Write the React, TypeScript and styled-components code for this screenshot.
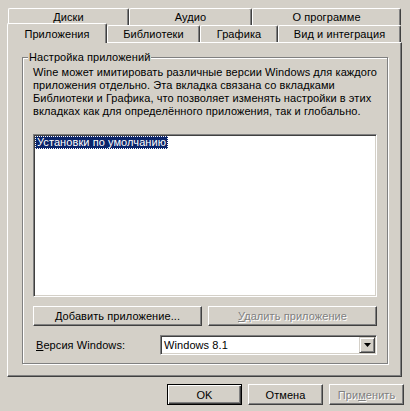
import React from "react";
import styled, { createGlobalStyle } from "styled-components";

const GlobalStyle = createGlobalStyle`
  html, body {
    margin: 0;
    background: #d4d0c8;
  }
  body {
    font-family: "Liberation Sans", Arial, sans-serif;
    font-size: 11px;
    letter-spacing: 0.08px;
    color: #000;
  }
`;

const Window = styled.div`
  box-sizing: border-box;
  width: 410px;
  height: 411px;
  padding: 8px 6px 0 7px;
  display: flex;
  flex-direction: column;
`;

const TabStrip = styled.div`
  width: 395px;
  display: flex;
  flex-direction: column;
  position: relative;
  z-index: 1;
`;

const TabRow = styled.div<{ $indent: number }>`
  display: flex;
  align-items: flex-end;
  height: 17px;
  padding-left: ${(p) => p.$indent}px;
`;

const Tab = styled.div<{ $width: number; $active?: boolean }>`
  box-sizing: border-box;
  width: ${(p) => p.$width}px;
  height: ${(p) => (p.$active ? 20 : 17)}px;
  margin-bottom: ${(p) => (p.$active ? -1 : 0)}px;
  border-top: 1px solid #fff;
  border-left: 1px solid #fff;
  border-right: 1px solid #404040;
  border-radius: 2px 2px 0 0;
  box-shadow: inset -1px 0 #808080;
  background: #d4d0c8;
  display: flex;
  align-items: center;
  justify-content: center;
  white-space: nowrap;
  position: relative;
  z-index: ${(p) => (p.$active ? 2 : 1)};
`;

const Panel = styled.div`
  box-sizing: border-box;
  width: 395px;
  height: 335px;
  border: 1px solid;
  border-color: #fff #404040 #404040 #fff;
  box-shadow: inset -1px -1px #808080;
  padding: 8px 0 0 14px;
`;

const Group = styled.fieldset`
  box-sizing: border-box;
  width: 366px;
  min-inline-size: 0;
  margin: 0;
  padding: 2px 10px 8px 10px;
  border: 1px solid #808080;
  box-shadow: 1px 1px 0 #fff, inset 1px 1px 0 #fff;
  display: flex;
  flex-direction: column;
`;

const GroupTitle = styled.legend`
  margin-left: -5px;
  padding: 0 1px;
  line-height: 13px;
  background: #d4d0c8;
`;

const Description = styled.p`
  margin: 0;
  line-height: 13px;
  white-space: nowrap;
`;

const ListBox = styled.div`
  box-sizing: border-box;
  height: 163px;
  margin-top: 16px;
  padding: 1px;
  background: #fff;
  border: 1px solid;
  border-color: #808080 #fff #fff #808080;
  box-shadow: inset 1px 1px #404040, inset -1px -1px #d4d0c8;
`;

const ListItem = styled.div<{ $selected?: boolean }>`
  width: fit-content;
  padding: 0 2px;
  line-height: 13px;
  color: ${(p) => (p.$selected ? "#fff" : "#000")};
  background: ${(p) => (p.$selected ? "#0a246a" : "transparent")};
  outline: ${(p) => (p.$selected ? "1px dotted #fff" : "none")};
  outline-offset: -1px;
`;

const ButtonRow = styled.div`
  display: grid;
  grid-template-columns: 1fr 1fr;
  gap: 6px;
  margin-top: 9px;
`;

const Button = styled.button<{ $default?: boolean; $width?: number; $height?: number }>`
  box-sizing: border-box;
  width: ${(p) => (p.$width ? `${p.$width}px` : "auto")};
  height: ${(p) => p.$height ?? 20}px;
  padding: 0;
  font: inherit;
  letter-spacing: inherit;
  color: #000;
  background: #d4d0c8;
  border: 1px solid;
  border-color: ${(p) => (p.$default ? "#000" : "#fff #404040 #404040 #fff")};
  box-shadow: ${(p) =>
    p.$default
      ? "inset 1px 1px #fff, inset -1px -1px #404040, inset -2px -2px #808080"
      : "inset -1px -1px #808080"};
  &:disabled {
    color: #808080;
    text-shadow: 1px 1px 0 #fff;
  }
`;

const Key = styled.span`
  text-decoration: underline;
`;

const VersionRow = styled.div`
  display: flex;
  align-items: center;
  margin-top: 9px;
`;

const VersionLabel = styled.span`
  padding-left: 3px;
`;

const Combo = styled.div`
  box-sizing: border-box;
  width: 217px;
  height: 20px;
  margin-left: auto;
  display: flex;
  align-items: stretch;
  padding: 1px 1px 1px 3px;
  background: #fff;
  border: 1px solid;
  border-color: #808080 #fff #fff #808080;
  box-shadow: inset 1px 1px #404040, inset -1px -1px #d4d0c8;
`;

const ComboValue = styled.span`
  flex: 1;
  align-self: center;
`;

const DropButton = styled.span`
  box-sizing: border-box;
  width: 16px;
  display: flex;
  align-items: center;
  justify-content: center;
  background: #d4d0c8;
  border: 1px solid;
  border-color: #d4d0c8 #404040 #404040 #d4d0c8;
  box-shadow: inset 1px 1px #fff, inset -1px -1px #808080;
`;

const Footer = styled.div`
  width: 397px;
  display: flex;
  justify-content: flex-end;
  gap: 6px;
  padding-top: 7px;
`;

const topTabs = [
  { label: "Диски", width: 121 },
  { label: "Аудио", width: 123 },
  { label: "О программе", width: 149 },
];

const bottomTabs = [
  { label: "Приложения", width: 100, active: true },
  { label: "Библиотеки", width: 93 },
  { label: "Графика", width: 78 },
  { label: "Вид и интеграция", width: 123 },
];

const descriptionLines = [
  "Wine может имитировать различные версии Windows для каждого",
  "приложения отдельно. Эта вкладка связана со вкладками",
  "Библиотеки и Графика, что позволяет изменять настройки в этих",
  "вкладках как для определённого приложения, так и глобально.",
];

const App: React.FC = () => {
  return (
    <>
      <GlobalStyle />
      <Window>
        <TabStrip>
          <TabRow $indent={1}>
            {topTabs.map((t) => (
              <Tab key={t.label} $width={t.width}>
                {t.label}
              </Tab>
            ))}
          </TabRow>
          <TabRow $indent={0}>
            {bottomTabs.map((t) => (
              <Tab key={t.label} $width={t.width} $active={t.active}>
                {t.label}
              </Tab>
            ))}
          </TabRow>
        </TabStrip>
        <Panel>
          <Group>
            <GroupTitle>Настройка приложений</GroupTitle>
            <Description>
              {descriptionLines.map((line, i) => (
                <React.Fragment key={i}>
                  {line}
                  {i < descriptionLines.length - 1 && <br />}
                </React.Fragment>
              ))}
            </Description>
            <ListBox>
              <ListItem $selected>Установки по умолчанию</ListItem>
            </ListBox>
            <ButtonRow>
              <Button>
                <Key>Д</Key>обавить приложение...
              </Button>
              <Button disabled>
                <Key>У</Key>далить приложение
              </Button>
            </ButtonRow>
            <VersionRow>
              <VersionLabel>
                <Key>В</Key>ерсия Windows:
              </VersionLabel>
              <Combo>
                <ComboValue>Windows 8.1</ComboValue>
                <DropButton>
                  <svg width="7" height="4" viewBox="0 0 7 4">
                    <polygon points="0,0 7,0 3.5,4" fill="#000" />
                  </svg>
                </DropButton>
              </Combo>
            </VersionRow>
          </Group>
        </Panel>
        <Footer>
          <Button $default $width={75} $height={21}>
            OK
          </Button>
          <Button $width={75} $height={21}>
            Отмена
          </Button>
          <Button disabled $width={75} $height={21}>
            При<Key>м</Key>енить
          </Button>
        </Footer>
      </Window>
    </>
  );
};

export default App;
